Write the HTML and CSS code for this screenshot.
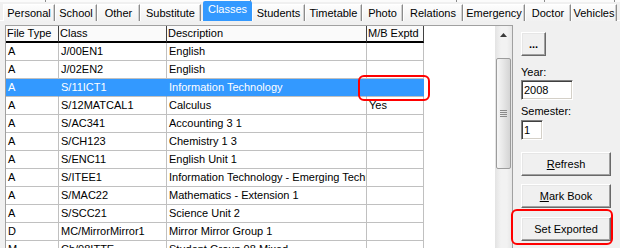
FILE: index.html
```html
<!DOCTYPE html>
<html lang="en">
<head>
  <meta charset="UTF-8" />
  <title>Staff Details - Classes</title>
  <link rel="stylesheet" href="styles.css">
</head>
<body>
  <div class="window">
    <div class="tabs-upper">
      <span class="up-a"></span><span class="up-b"></span><span class="up-c"></span><span class="up-d"></span><span class="up-e"></span>
    </div>
    <div class="tabs">
      <div class="tab">Personal</div>
      <div class="tab">School</div>
      <div class="tab">Other</div>
      <div class="tab">Substitute</div>
      <div class="tab active">Classes</div>
      <div class="tab">Students</div>
      <div class="tab">Timetable</div>
      <div class="tab">Photo</div>
      <div class="tab">Relations</div>
      <div class="tab">Emergency</div>
      <div class="tab">Doctor</div>
      <div class="tab">Vehicles</div>
    </div>

    <div class="content">
      <div class="grid">
        <div class="table">
          <div class="row head">
            <div class="cell">File Type</div>
            <div class="cell">Class</div>
            <div class="cell">Description</div>
            <div class="cell">M/B Exptd</div>
          </div>
          <div class="row">
            <div class="cell">A</div><div class="cell">J/00EN1</div><div class="cell">English</div><div class="cell"></div>
          </div>
          <div class="row">
            <div class="cell">A</div><div class="cell">J/02EN2</div><div class="cell">English</div><div class="cell"></div>
          </div>
          <div class="row sel">
            <div class="cell">A</div><div class="cell">S/11ICT1</div><div class="cell">Information Technology</div><div class="cell"></div>
          </div>
          <div class="row">
            <div class="cell">A</div><div class="cell">S/12MATCAL1</div><div class="cell">Calculus</div><div class="cell">Yes</div>
          </div>
          <div class="row">
            <div class="cell">A</div><div class="cell">S/AC341</div><div class="cell">Accounting 3 1</div><div class="cell"></div>
          </div>
          <div class="row">
            <div class="cell">A</div><div class="cell">S/CH123</div><div class="cell">Chemistry 1 3</div><div class="cell"></div>
          </div>
          <div class="row">
            <div class="cell">A</div><div class="cell">S/ENC11</div><div class="cell">English Unit 1</div><div class="cell"></div>
          </div>
          <div class="row">
            <div class="cell">A</div><div class="cell">S/ITEE1</div><div class="cell">Information Technology - Emerging Technologies</div><div class="cell"></div>
          </div>
          <div class="row">
            <div class="cell">A</div><div class="cell">S/MAC22</div><div class="cell">Mathematics - Extension 1</div><div class="cell"></div>
          </div>
          <div class="row">
            <div class="cell">A</div><div class="cell">S/SCC21</div><div class="cell">Science Unit 2</div><div class="cell"></div>
          </div>
          <div class="row">
            <div class="cell">D</div><div class="cell">MC/MirrorMirror1</div><div class="cell">Mirror Mirror Group 1</div><div class="cell"></div>
          </div>
          <div class="row">
            <div class="cell">M</div><div class="cell">Ch/08ITTE</div><div class="cell">Student Group 08 Mixed</div><div class="cell"></div>
          </div>
        </div>

        <div class="vscroll">
          <div class="sb-up">
            <svg width="7" height="4" viewBox="0 0 7 4"><path d="M0 4L3.5 0L7 4Z" fill="#3a3a3a"/></svg>
          </div>
          <div class="sb-thumb">
            <svg width="7" height="7" viewBox="0 0 7 7">
              <path d="M0 0.5H7M0 2.5H7M0 4.5H7M0 6.5H7" stroke="#8a8a8a" stroke-width="1"/>
            </svg>
          </div>
        </div>
      </div>

      <div class="side">
        <button class="btn btn-dots">...</button>
        <div class="label label-year">Year:</div>
        <input class="field field-year" type="text" value="2008" />
        <div class="label label-sem">Semester:</div>
        <input class="field field-sem" type="text" value="1" />
        <button class="btn btn-wide btn-refresh"><u>R</u>efresh</button>
        <button class="btn btn-wide btn-mark"><u>M</u>ark Book</button>
        <button class="btn btn-wide btn-set">Set Exported</button>
      </div>
    </div>

    <!-- highlight marks drawn over the form -->
    <div class="mark mark-cell"></div>
    <div class="mark mark-set"></div>
  </div>
</body>
</html>
```

FILE: styles.css
```css
* {
  box-sizing: border-box;
}
body {
  margin: 0;
  background: #f0f0f0;
  font-family: "Liberation Sans", Arial, sans-serif;
  font-size: 11px;
  color: #000;
}
.window {
  position: relative;
  width: 620px;
  height: 248px;
  overflow: hidden;
}

/* upper row of tabs, only its bottom edge shows */
.tabs-upper {
  display: flex;
  height: 2px;
  background: #fbfbfb;
}
.tabs-upper span {
  border-right: 1px solid #8c8c8c;
}
.up-a { width: 46px; }
.up-b { width: 205px; }
.up-c { width: 206px; }
.up-d { width: 88px; }
.up-e { width: 70px; }

.tabs {
  display: grid;
  grid-template-columns: 52px 42px 43px 61px 51px 53px 57px 41px 60px 62px 46px 46px;
  align-items: end;
  height: 19px;
  padding-left: 3px;
  border-bottom: 1px solid #fff;
}
.tab {
  height: 17px;
  line-height: 16px;
  text-align: center;
  white-space: nowrap;
  background: linear-gradient(#fdfdfd, #f1f1f1);
  border-top: 1px solid #fff;
  border-left: 1px solid #fff;
  border-right: 1px solid #8c8c8c;
  box-shadow: inset -1px 0 #d0d0d0;
}
.tab.active {
  align-self: start;
  margin-top: -1px;
  margin-left: 2px;
  height: 20px;
  line-height: 17px;
  background: #3399ff;
  color: #fff;
  border: 0;
  border-radius: 2px 2px 0 0;
  box-shadow: none;
}

.content {
  display: flex;
  height: 223px;
  margin-top: 4px;
}

/* data grid */
.grid {
  display: flex;
  width: 508px;
  margin-left: 5px;
  background: #fff;
  border: 1px solid #a0a0a0;
  border-bottom: 0;
}
.table {
  width: 489px;
}
.row {
  display: grid;
  grid-template-columns: 53px 108px 200px 57px;
  height: 18px;
}
.cell {
  padding-left: 2px;
  line-height: 17px;
  white-space: nowrap;
  overflow: hidden;
  border-right: 1px solid #c0c0c0;
  border-bottom: 1px solid #c0c0c0;
}
.row.head {
  height: 17px;
}
.row.head .cell {
  padding-left: 1px;
  line-height: 15px;
  background: #fafafa;
  border-right: 1px solid #404040;
  border-bottom: 2px solid #000;
}
.row.sel .cell {
  background: #3399ff;
  color: #fff;
  border-right-color: #3399ff;
}

.vscroll {
  width: 17px;
  display: flex;
  flex-direction: column;
  background: linear-gradient(90deg, #e3e3e3, #f2f2f2 35%, #f2f2f2 70%, #e6e6e6);
}
.sb-up {
  height: 17px;
  display: flex;
  align-items: center;
  justify-content: center;
}
.sb-thumb {
  height: 111px;
  margin: 15px 1px 0;
  display: flex;
  align-items: center;
  justify-content: center;
  border: 1px solid #9c9c9c;
  border-radius: 2px;
  background: linear-gradient(90deg, #f6f6f6, #e6e6e6 50%, #d4d4d4);
}

/* right side controls */
.side {
  flex: 1;
  display: flex;
  flex-direction: column;
  align-items: flex-start;
  padding: 7px 0 0 8px;
}
.btn {
  display: block;
  padding: 0;
  font: inherit;
  color: #000;
  text-align: center;
  background: #f0f0f0;
  border: 1px solid;
  border-color: #fff #696969 #696969 #fff;
  box-shadow: inset -1px -1px #a0a0a0, inset 1px 1px #e6e6e6;
}
.btn-dots {
  width: 25px;
  height: 24px;
  font-weight: bold;
  line-height: 20px;
}
.btn-wide {
  width: 90px;
  height: 24px;
  line-height: 22px;
}
.btn-refresh { margin-top: 12px; }
.btn-mark { margin-top: 8px; }
.btn-set { margin-top: 9px; }

.label {
  line-height: 14px;
}
.label-year { margin-top: 9px; }
.label-sem { margin-top: 4px; }

.field {
  display: block;
  height: 20px;
  padding: 0 0 0 2px;
  font: inherit;
  color: #000;
  background: #fff;
  border: 1px solid;
  border-color: #808080 #fff #fff #808080;
  box-shadow: inset 1px 1px #404040, inset -1px -1px #d4d0c8;
  outline: none;
}
.field-year {
  width: 52px;
  margin-top: 1px;
}
.field-sem {
  width: 22px;
  margin-top: 2px;
}

.mark {
  position: absolute;
  border: 2px solid #f00;
  border-radius: 6px;
}
.mark-cell {
  left: 358px;
  top: 75px;
  width: 72px;
  height: 26px;
}
.mark-set {
  left: 511px;
  top: 209px;
  width: 102px;
  height: 36px;
}
```
